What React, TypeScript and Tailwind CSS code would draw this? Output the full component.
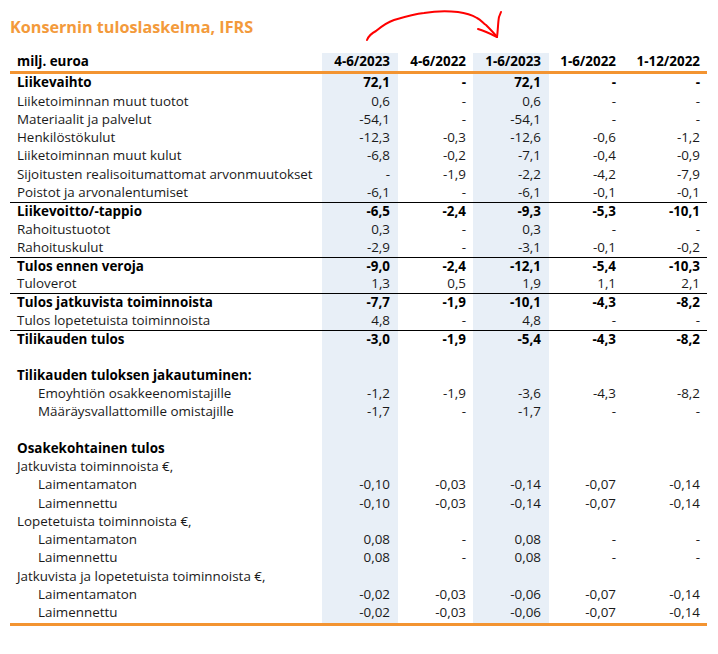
import React from "react";

type Row = {
  l?: string;
  b?: boolean;
  top?: boolean;
  ind?: boolean;
  v?: string[];
};

const rows: Row[] = [
  { l: "Liikevaihto", b: true, v: ["72,1", "-", "72,1", "-", "-"] },
  { l: "Liiketoiminnan muut tuotot", v: ["0,6", "-", "0,6", "-", "-"] },
  { l: "Materiaalit ja palvelut", v: ["-54,1", "-", "-54,1", "-", "-"] },
  { l: "Henkilöstökulut", v: ["-12,3", "-0,3", "-12,6", "-0,6", "-1,2"] },
  { l: "Liiketoiminnan muut kulut", v: ["-6,8", "-0,2", "-7,1", "-0,4", "-0,9"] },
  { l: "Sijoitusten realisoitumattomat arvonmuutokset", v: ["-", "-1,9", "-2,2", "-4,2", "-7,9"] },
  { l: "Poistot ja arvonalentumiset", v: ["-6,1", "-", "-6,1", "-0,1", "-0,1"] },
  { l: "Liikevoitto/-tappio", b: true, top: true, v: ["-6,5", "-2,4", "-9,3", "-5,3", "-10,1"] },
  { l: "Rahoitustuotot", v: ["0,3", "-", "0,3", "-", "-"] },
  { l: "Rahoituskulut", v: ["-2,9", "-", "-3,1", "-0,1", "-0,2"] },
  { l: "Tulos ennen veroja", b: true, top: true, v: ["-9,0", "-2,4", "-12,1", "-5,4", "-10,3"] },
  { l: "Tuloverot", v: ["1,3", "0,5", "1,9", "1,1", "2,1"] },
  { l: "Tulos jatkuvista toiminnoista", b: true, top: true, v: ["-7,7", "-1,9", "-10,1", "-4,3", "-8,2"] },
  { l: "Tulos lopetetuista toiminnoista", v: ["4,8", "-", "4,8", "-", "-"] },
  { l: "Tilikauden tulos", b: true, top: true, v: ["-3,0", "-1,9", "-5,4", "-4,3", "-8,2"] },
  {},
  { l: "Tilikauden tuloksen jakautuminen:", b: true },
  { l: "Emoyhtiön osakkeenomistajille", ind: true, v: ["-1,2", "-1,9", "-3,6", "-4,3", "-8,2"] },
  { l: "Määräysvallattomille omistajille", ind: true, v: ["-1,7", "-", "-1,7", "-", "-"] },
  {},
  { l: "Osakekohtainen tulos", b: true },
  { l: "Jatkuvista toiminnoista €," },
  { l: "Laimentamaton", ind: true, v: ["-0,10", "-0,03", "-0,14", "-0,07", "-0,14"] },
  { l: "Laimennettu", ind: true, v: ["-0,10", "-0,03", "-0,14", "-0,07", "-0,14"] },
  { l: "Lopetetuista toiminnoista €," },
  { l: "Laimentamaton", ind: true, v: ["0,08", "-", "0,08", "-", "-"] },
  { l: "Laimennettu", ind: true, v: ["0,08", "-", "0,08", "-", "-"] },
  { l: "Jatkuvista ja lopetetuista toiminnoista €," },
  { l: "Laimentamaton", ind: true, v: ["-0,02", "-0,03", "-0,06", "-0,07", "-0,14"] },
  { l: "Laimennettu", ind: true, v: ["-0,02", "-0,03", "-0,06", "-0,07", "-0,14"] },
];

const colCls = [
  "w-[76px] pr-2 bg-[#e8eff7]",
  "w-[75px] pr-[7px]",
  "w-[76px] pr-2 bg-[#e8eff7]",
  "w-[75px] pr-2",
  "w-[83px] pr-[7px]",
];

const headers = ["4-6/2023", "4-6/2022", "1-6/2023", "1-6/2022", "1-12/2022"];

export default function App() {
  return (
    <div
      className="relative w-[718px] h-[654px] bg-white overflow-hidden"
      style={{ fontFamily: '"Open Sans", "Noto Sans", sans-serif' }}
    >
      <svg
        className="absolute left-0 top-0"
        width="718"
        height="60"
        viewBox="0 0 718 60"
        fill="none"
      >
        <path
          d="M367 40 C369 35 372 33 376 31 C382 26 388 22 394 20 C404 17 414 14 424 13 C436 11 448 11 458 12 C466 13 472 15 477 18 C481 20 483 23 486 25 C490 29 494 33 497 37"
          stroke="#ff0000"
          strokeWidth="2"
          strokeLinecap="round"
        />
        <path
          d="M478 29 C485 31 491 34 497 37 C498 30 498 22 499 17 L501 12"
          stroke="#ff0000"
          strokeWidth="2"
          strokeLinecap="round"
          strokeLinejoin="round"
        />
      </svg>

      <div className="pl-[10px] pt-[15px]">
        <div className="text-[16.2px] leading-[24px] font-bold text-[#f39a3b]">
          Konsernin tuloslaskelma, IFRS
        </div>
      </div>

      <div className="absolute left-[10px] top-[53px] w-[697px] text-[13.4px] text-[#1a1a1a]">
        <div className="flex h-[21px] border-b-[3px] border-[#f39431] font-bold text-black">
          <div className="w-[312px] pl-[7px] flex items-center leading-none">milj. euroa</div>
          {headers.map((h, i) => (
            <div key={i} className={`${colCls[i]} flex items-center justify-end leading-none`}>
              {h}
            </div>
          ))}
        </div>
        {rows.map((r, ri) => (
          <div
            key={ri}
            className={`flex h-[18.27px] ${r.top ? "border-t border-black" : ""} ${
              r.b ? "font-bold text-black" : ""
            }`}
          >
            <div
              className={`w-[312px] ${r.ind ? "pl-[28px]" : "pl-[7px]"} flex items-center whitespace-nowrap leading-none`}
            >
              {r.l ?? ""}
            </div>
            {colCls.map((c, i) => (
              <div key={i} className={`${c} flex items-center justify-end leading-none`}>
                {r.v ? r.v[i] : ""}
              </div>
            ))}
          </div>
        ))}
        <div className="flex h-[4px] border-b-[3px] border-[#f39431]">
          <div className="w-[312px]" />
          {colCls.map((c, i) => (
            <div key={i} className={c} />
          ))}
        </div>
      </div>
    </div>
  );
}
